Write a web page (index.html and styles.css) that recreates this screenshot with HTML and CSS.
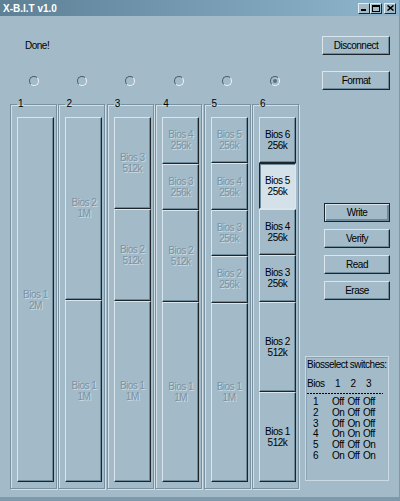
FILE: index.html
```html
<!DOCTYPE html>
<html lang="en">
<head>
    <meta charset="UTF-8">
    <title>X-B.I.T v1.0</title>
    <link rel="stylesheet" href="styles.css">
</head>
<body>

<div class="window">
    <!-- Title bar -->
    <div class="titlebar">
        <span class="title">X-B.I.T v1.0</span>
        <div class="caption-buttons">
            <span class="cap-btn">
                <svg width="6" height="6" viewBox="0 0 6 6"><rect x="0" y="4" width="5" height="2" fill="#000"/></svg>
            </span>
            <span class="cap-btn">
                <svg width="8" height="7" viewBox="0 0 8 7"><rect x="0.5" y="0.5" width="7" height="6" fill="none" stroke="#000"/><rect x="0" y="0" width="8" height="2" fill="#000"/></svg>
            </span>
            <span class="cap-btn close">
                <svg width="7" height="6" viewBox="0 0 7 6"><path d="M0.5 0.5 L6.5 5.5 M6.5 0.5 L0.5 5.5" stroke="#000" stroke-width="1.6"/></svg>
            </span>
        </div>
    </div>

    <div class="client">
        <!-- Left side: status, radios and flash groups -->
        <div class="left">
            <div class="status">Done!</div>

            <div class="radios">
                <div class="radio-cell"><span class="radio"></span></div>
                <div class="radio-cell"><span class="radio"></span></div>
                <div class="radio-cell"><span class="radio"></span></div>
                <div class="radio-cell"><span class="radio"></span></div>
                <div class="radio-cell"><span class="radio"></span></div>
                <div class="radio-cell"><span class="radio checked"></span></div>
            </div>

            <div class="groups">
                <fieldset class="group">
                    <legend>1</legend>
                    <div class="slots">
                        <button class="slot s8" disabled>Bios 1<br>2M</button>
                    </div>
                </fieldset>
                <fieldset class="group">
                    <legend>2</legend>
                    <div class="slots">
                        <button class="slot s4" disabled>Bios 2<br>1M</button>
                        <button class="slot s4" disabled>Bios 1<br>1M</button>
                    </div>
                </fieldset>
                <fieldset class="group">
                    <legend>3</legend>
                    <div class="slots">
                        <button class="slot s2" disabled>Bios 3<br>512k</button>
                        <button class="slot s2" disabled>Bios 2<br>512k</button>
                        <button class="slot s4" disabled>Bios 1<br>1M</button>
                    </div>
                </fieldset>
                <fieldset class="group">
                    <legend>4</legend>
                    <div class="slots">
                        <button class="slot s1" disabled>Bios 4<br>256k</button>
                        <button class="slot s1" disabled>Bios 3<br>256k</button>
                        <button class="slot s2" disabled>Bios 2<br>512k</button>
                        <button class="slot s4" disabled>Bios 1<br>1M</button>
                    </div>
                </fieldset>
                <fieldset class="group">
                    <legend>5</legend>
                    <div class="slots">
                        <button class="slot s1" disabled>Bios 5<br>256k</button>
                        <button class="slot s1" disabled>Bios 4<br>256k</button>
                        <button class="slot s1" disabled>Bios 3<br>256k</button>
                        <button class="slot s1" disabled>Bios 2<br>256k</button>
                        <button class="slot s4" disabled>Bios 1<br>1M</button>
                    </div>
                </fieldset>
                <fieldset class="group">
                    <legend>6</legend>
                    <div class="slots">
                        <button class="slot s1">Bios 6<br>256k</button>
                        <button class="slot s1 active">Bios 5<br>256k</button>
                        <button class="slot s1">Bios 4<br>256k</button>
                        <button class="slot s1">Bios 3<br>256k</button>
                        <button class="slot s2">Bios 2<br>512k</button>
                        <button class="slot s2">Bios 1<br>512k</button>
                    </div>
                </fieldset>
            </div>
        </div>

        <!-- Right side: commands and switch table -->
        <div class="right">
            <button class="btn btn-disconnect">Disconnect</button>
            <button class="btn btn-format">Format</button>

            <div class="actions">
                <button class="btn default">Write</button>
                <button class="btn">Verify</button>
                <button class="btn">Read</button>
                <button class="btn">Erase</button>
            </div>

            <div class="switches">
                <div class="sw-title">Biosselect switches:</div>
                <div class="sw-grid sw-head">
                    <span>Bios</span><span class="num">1</span><span class="num">2</span><span class="num">3</span>
                </div>
                <div class="sw-rule"></div>
                <div class="sw-grid sw-rows">
                    <span class="idx">1</span><span>Off</span><span>Off</span><span>Off</span>
                    <span class="idx">2</span><span>On</span><span>Off</span><span>Off</span>
                    <span class="idx">3</span><span>Off</span><span>On</span><span>Off</span>
                    <span class="idx">4</span><span>On</span><span>On</span><span>Off</span>
                    <span class="idx">5</span><span>Off</span><span>Off</span><span>On</span>
                    <span class="idx">6</span><span>On</span><span>Off</span><span>On</span>
                </div>
            </div>
        </div>
    </div>
</div>

</body>
</html>
```

FILE: styles.css
```css
body {
    margin: 0;
    font-family: "Liberation Sans", Arial, sans-serif;
    font-size: 10px;
    letter-spacing: -0.5px;
    color: #000;
}

.window {
    width: 400px;
    height: 501px;
    box-sizing: border-box;
    background: #a3bbc9;
    display: flex;
    flex-direction: column;
    border-bottom: 4px solid #7c99ad;
    border-right: 1px solid #7c99ad;
}

/* title bar */
.titlebar {
    height: 16px;
    flex: none;
    display: flex;
    align-items: center;
    justify-content: space-between;
    padding: 0 3px 0 3px;
    background: linear-gradient(to right, #5d8096, #8fb6ce);
}

.title {
    color: #fff;
    font-weight: bold;
    font-size: 10px;
    letter-spacing: 0;
}

.caption-buttons {
    display: flex;
}

.cap-btn {
    width: 12px;
    height: 11px;
    box-sizing: border-box;
    background: #a3bbc9;
    border: 1px solid;
    border-color: #e3edf2 #1d262b #1d262b #e3edf2;
    display: flex;
    align-items: center;
    justify-content: center;
}

.cap-btn.close {
    margin-left: 2px;
}

/* client area */
.client {
    flex: 1;
    display: flex;
}

.left {
    width: 300px;
    flex: none;
    padding-left: 10px;
    box-sizing: border-box;
}

.status {
    margin-top: 24px;
    padding-left: 15px;
    line-height: 12px;
}

.radios {
    display: flex;
    gap: 1.4px;
    margin-top: 24px;
}

.radio-cell {
    width: 47px;
    display: flex;
    justify-content: center;
}

.radio {
    width: 10px;
    height: 10px;
    box-sizing: border-box;
    border-radius: 50%;
    border: 1px solid;
    border-color: #4e5c65 #eef4f7 #eef4f7 #4e5c65;
    display: flex;
    align-items: center;
    justify-content: center;
}

.radio.checked::after {
    content: "";
    width: 4px;
    height: 4px;
    border-radius: 50%;
    background: #5b7080;
}

/* flash groups */
.groups {
    display: flex;
    gap: 1.4px;
    margin-top: 12px;
}

.group {
    width: 47px;
    min-width: 0;
    box-sizing: border-box;
    margin: 0;
    padding: 7px 2px 6px 6px;
    border: 1px solid #7890a0;
    box-shadow: inset 1px 1px 0 #d3e0e8, 1px 1px 0 #d3e0e8;
}

.group legend {
    padding: 0 1px;
    line-height: 12px;
}

.slots {
    width: 37px;
    height: 365px;
    display: flex;
    flex-direction: column;
}

.slot {
    flex: 1 1 0;
    min-height: 0;
    margin: 0;
    padding: 0;
    font: inherit;
    letter-spacing: inherit;
    line-height: 11px;
    color: #000;
    text-align: center;
    background: #a3bbc9;
    border: 1px solid;
    border-color: #dbe6ec #1c252a #1c252a #dbe6ec;
    box-shadow: inset -1px -1px 0 #6f8a9b;
}

.s2 { flex-grow: 2; }
.s4 { flex-grow: 4; }
.s8 { flex-grow: 8; }

.slot:disabled {
    color: #7a94a4;
    text-shadow: 1px 1px 0 #cddae2;
}

.slot.active {
    background: #d4e1e9;
    border-color: #1c252a #dbe6ec #dbe6ec #1c252a;
    box-shadow: inset 1px 1px 0 #6f8a9b;
}

/* right column */
.right {
    flex: 1;
    display: flex;
    flex-direction: column;
    align-items: flex-start;
}

.btn {
    width: 68px;
    height: 19px;
    margin: 0 0 0 22px;
    padding: 0;
    font: inherit;
    letter-spacing: inherit;
    color: #000;
    background: #a3bbc9;
    border: 1px solid;
    border-color: #dbe6ec #1c252a #1c252a #dbe6ec;
    box-shadow: inset -1px -1px 0 #6f8a9b;
}

.btn-disconnect {
    margin-top: 20px;
}

.btn-format {
    margin-top: 16px;
}

.actions {
    margin-top: 113px;
    display: flex;
    flex-direction: column;
    gap: 7px;
}

.actions .btn {
    width: 66px;
    margin-left: 24px;
}

.btn.default {
    border-color: #1c252a;
    box-shadow: inset 1px 1px 0 #dbe6ec, inset -2px -2px 0 #6f8a9b;
}

.switches {
    margin: 56px 0 0 5px;
    width: 84px;
    height: 125px;
    box-sizing: border-box;
    padding: 2px 0 0 1px;
    border: 1px solid #cbd9e2;
    box-shadow: inset 1px 1px 0 #8aa2b1;
}

.sw-title {
    line-height: 11px;
    white-space: nowrap;
}

.sw-grid {
    display: grid;
    grid-template-columns: 25px 15.5px 15.5px 15.5px;
}

.sw-head {
    margin-top: 8px;
    line-height: 11px;
}

.sw-head .num {
    padding-left: 3px;
}

.sw-rule {
    width: 76px;
    height: 1px;
    margin: 4px 0 3px;
    background: linear-gradient(to right, #000 2px, transparent 2px) 0 0 / 3px 1px repeat-x;
}

.sw-rows {
    line-height: 10.8px;
}

.sw-rows .idx {
    padding-left: 6px;
}
```
